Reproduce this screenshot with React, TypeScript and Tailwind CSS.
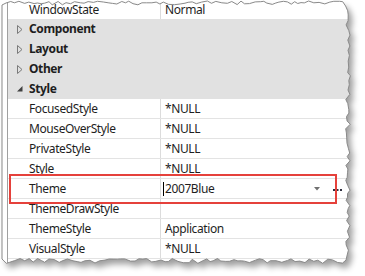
import React from "react";

type Row = { name: string; value?: string; kind: "prop" | "cat"; expanded?: boolean };

const rows: Row[] = [
  { name: "Component", kind: "cat" },
  { name: "Layout", kind: "cat" },
  { name: "Other", kind: "cat" },
  { name: "Style", kind: "cat", expanded: true },
  { name: "FocusedStyle", value: "*NULL", kind: "prop" },
  { name: "MouseOverStyle", value: "*NULL", kind: "prop" },
  { name: "PrivateStyle", value: "*NULL", kind: "prop" },
  { name: "Style", value: "*NULL", kind: "prop" },
  { name: "Theme", value: "2007Blue", kind: "prop" },
  { name: "ThemeDrawStyle", value: "", kind: "prop" },
  { name: "ThemeStyle", value: "Application", kind: "prop" },
  { name: "VisualStyle", value: "*NULL", kind: "prop" },
];

function rand(seed: number) {
  let s = seed;
  return () => {
    s = (s * 9301 + 49297) % 233280;
    return s / 233280;
  };
}

function tornPath() {
  const r = rand(7);
  const pts: [number, number][] = [];
  pts.push([2, 5]);
  for (let x = 6; x < 346; x += 3 + r() * 3) {
    pts.push([x, 3 + (r() - 0.5) * 4]);
  }
  for (let y = 6; y < 259; y += 3 + r() * 3) {
    pts.push([348 + (r() - 0.5) * 5, y]);
  }
  for (let x = 346; x > 4; x -= 3 + r() * 3) {
    pts.push([x, 261 + (r() - 0.5) * 5]);
  }
  pts.push([2, 259]);
  return "M" + pts.map((p) => p[0].toFixed(1) + " " + p[1].toFixed(1)).join(" L") + " Z";
}

function Collapsed() {
  return (
    <svg width="6" height="9" viewBox="0 0 6 9" className="shrink-0">
      <path d="M0.5 0.5 L5 4.5 L0.5 8.5 Z" fill="none" stroke="#7a7a7a" strokeWidth="1" />
    </svg>
  );
}

function Expanded() {
  return (
    <svg width="6" height="6" viewBox="0 0 6 6" className="shrink-0">
      <path d="M5.5 0 L5.5 5.5 L0 5.5 Z" fill="#404040" />
    </svg>
  );
}

export default function App() {
  const d = tornPath();
  const outer = "M0 0 H365 V276 H0 Z " + d;
  return (
    <div
      className="relative w-[365px] h-[276px] overflow-hidden bg-white text-[12px] tracking-[-0.4px] text-[#1e1e1e]"
      style={{ fontFamily: '"Noto Sans", "Open Sans", sans-serif' }}
    >
      <div className="ml-[7px] w-[346px] border-l border-[#a0a0a0] h-[276px]">
        <div className="flex h-[19px] items-center">
          <div className="w-[152px] pl-[21px] leading-[19px]">WindowState</div>
          <div className="h-full border-l border-[#dcdcdc] pl-[4px] leading-[19px]">Normal</div>
        </div>
        {rows.map((row, i) =>
          row.kind === "cat" ? (
            <div key={i} className="flex h-[20px] items-center bg-[#e1e1e1]">
              <div className="w-[21px] flex justify-end pr-[6px]">
                {row.expanded ? <Expanded /> : <Collapsed />}
              </div>
              <div className="font-bold">{row.name}</div>
            </div>
          ) : (
            <div key={i} className="flex h-[20px] border-b border-[#e3e3e3]">
              <div className="w-[152px] pl-[21px] leading-[19px]">{row.name}</div>
              <div className="flex-1 h-full border-l border-[#dcdcdc] pl-[4px] leading-[19px] flex items-center">
                {row.name === "Theme" ? (
                  <>
                    <span className="w-px h-[14px] bg-black -ml-[2px] mr-px" />
                    <span className="flex-1">{row.value}</span>
                    <svg width="6" height="4" viewBox="0 0 6 4" className="mr-[13px] shrink-0">
                      <path d="M0 0 H6 L3 3.5 Z" fill="#707070" />
                    </svg>
                    <svg width="9" height="2" viewBox="0 0 9 2" className="mr-[11px] mt-[2px] shrink-0">
                      <rect x="0" y="0" width="2" height="2" fill="#303040" />
                      <rect x="3.5" y="0" width="2" height="2" fill="#303040" />
                      <rect x="7" y="0" width="2" height="2" fill="#303040" />
                    </svg>
                  </>
                ) : (
                  row.value
                )}
              </div>
            </div>
          )
        )}
      </div>
      <div className="absolute left-[9px] top-[174px] w-[328px] h-[30px] border-2 border-[#e5413b]" />
      <svg className="absolute left-0 top-0" width="365" height="276">
        <defs>
          <clipPath id="outside">
            <path d={outer} clipRule="evenodd" />
          </clipPath>
          <filter id="blur" x="-10%" y="-10%" width="120%" height="120%">
            <feGaussianBlur stdDeviation="3" />
          </filter>
        </defs>
        <path d={outer} fill="#ffffff" fillRule="evenodd" />
        <g clipPath="url(#outside)">
          <path d={d} fill="#000" opacity="0.38" filter="url(#blur)" transform="translate(4 5)" />
        </g>
        <path d={d} fill="none" stroke="#8a8a8a" strokeWidth="1" />
      </svg>
    </div>
  );
}
